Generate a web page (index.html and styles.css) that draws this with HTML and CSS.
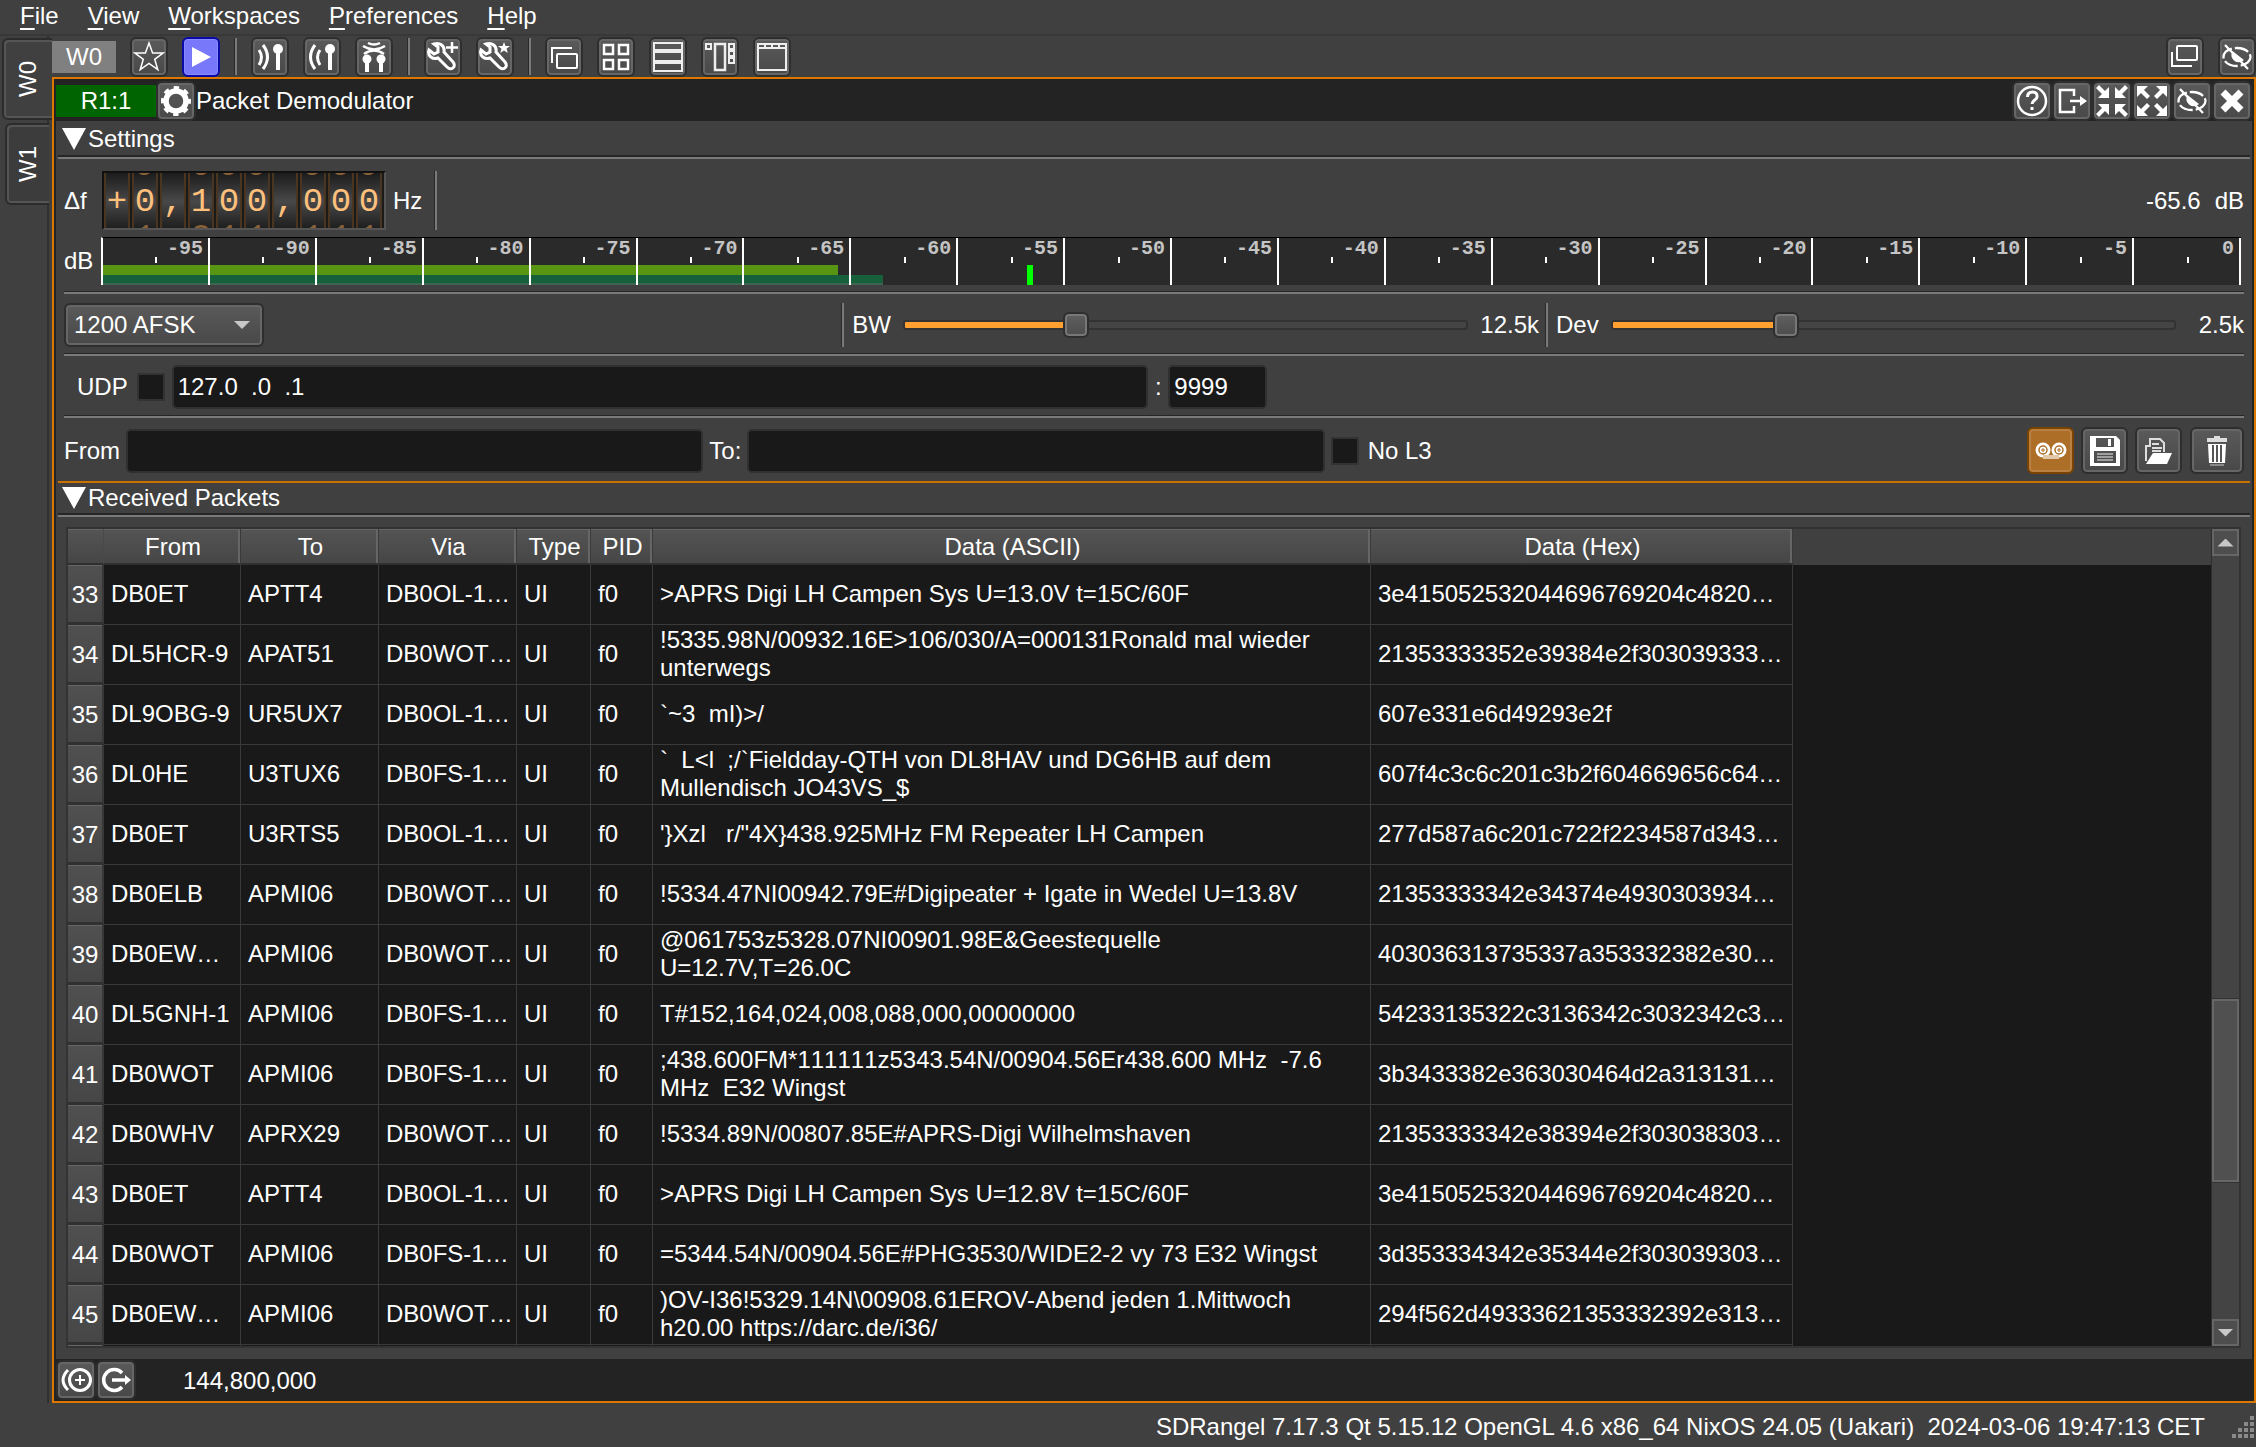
FILE: index.html
```html
<!DOCTYPE html>
<html lang="en">
<head>
<meta charset="utf-8">
<title>SDRangel</title>
<link rel="stylesheet" href="styles.css">
</head>
<body>
<nav class="menubar">
  <button><u>F</u>ile</button><button><u>V</u>iew</button><button><u>W</u>orkspaces</button><button><u>P</u>references</button><button><u>H</u>elp</button>
</nav>
<div class="main">
  <div class="tabs">
    <button class="tab active"><span>W0</span></button>
    <button class="tab"><span>W1</span></button>
  </div>
  <main class="workspace">
    <div class="toolbar">
      <span class="ws-label">W0</span>
      <button class="btn" aria-label="Presets"><svg viewBox="0 0 32 32"><path d="M16 2l3.600 10h10.400l-8.300 6.300 3.100 10.400L16 22.500l-8.800 6.200 3.100-10.400L2 12h10.400z" fill="none" stroke="#fff" stroke-width="1.500"/></svg></button>
      <button class="btn play" aria-label="Start"><svg viewBox="0 0 32 32"><path d="M7 6v20l19-10z" fill="#fff"/></svg></button>
      <i class="vsep"></i>
      <button class="btn" aria-label="Add Rx device"><svg viewBox="0 0 32 32" fill="none" stroke="#fff" stroke-width="3"><path d="M5 9q5 7 0 15M9 4q9 12 0 24"/><circle cx="24" cy="8" r="5" fill="#fff" stroke="none"/><path d="M24 8v21" stroke-width="4"/></svg></button>
      <button class="btn" aria-label="Add Tx device"><svg viewBox="0 0 32 32" fill="none" stroke="#fff" stroke-width="3"><path d="M9 4q-9 12 0 24M14 9q-5 7 0 15"/><circle cx="24" cy="8" r="5" fill="#fff" stroke="none"/><path d="M24 8v21" stroke-width="4"/></svg></button>
      <button class="btn" aria-label="Add MIMO device"><svg viewBox="0 0 32 32" fill="none" stroke="#fff" stroke-width="2.500"><path d="M10 2q6 3 12 0M5 5q11 7 22 0"/><path d="M6 13q10-7 20 0"/><circle cx="9" cy="18" r="4.500" fill="#fff" stroke="none"/><circle cx="23" cy="18" r="4.500" fill="#fff" stroke="none"/><path d="M9 18v13M23 18v13" stroke-width="4"/></svg></button>
      <i class="vsep"></i>
      <button class="btn" aria-label="Add feature"><svg viewBox="0 0 32 32" fill="none" stroke="#fff" stroke-width="3"><path d="M2 9l5 4 4-2 0-5-4-3c6-2 11 2 10 8l9 10c4 5-2 9-6 5l-9-9C6 19 0 15 2 9z"/><path d="M25 1v11M19 6.500h12" stroke-width="2.500"/></svg></button>
      <button class="btn" aria-label="Feature presets"><svg viewBox="0 0 32 32" fill="none" stroke="#fff" stroke-width="3"><path d="M2 9l5 4 4-2 0-5-4-3c6-2 11 2 10 8l9 10c4 5-2 9-6 5l-9-9C6 19 0 15 2 9z"/><path d="M25 1l1.500 4h4.500l-3.500 2.700 1.300 4.300-3.800-2.600-3.800 2.600 1.300-4.300L19 5h4.500z" fill="#fff" stroke="none"/></svg></button>
      <i class="vsep"></i>
      <button class="btn" aria-label="Cascade"><svg viewBox="0 0 32 32" fill="none" stroke="#fff" stroke-width="2"><path d="M4 22V7h20"/><rect x="9" y="13" width="20" height="14" rx="1"/></svg></button>
      <button class="btn" aria-label="Tile"><svg viewBox="0 0 32 32" fill="none" stroke="#fff" stroke-width="2.500"><rect x="4" y="4" width="9" height="9"/><rect x="19" y="4" width="9" height="9"/><rect x="4" y="19" width="9" height="9"/><rect x="19" y="19" width="9" height="9"/></svg></button>
      <button class="btn" aria-label="Stack"><svg viewBox="0 0 32 32" fill="none" stroke="#eee" stroke-width="2"><rect x="2" y="2" width="28" height="7"/><rect x="2" y="11" width="28" height="9"/><rect x="2" y="22" width="28" height="8"/></svg></button>
      <button class="btn" aria-label="Auto stack"><svg viewBox="0 0 32 32" fill="none" stroke="#eee" stroke-width="2"><rect x="2" y="3" width="5" height="5"/><rect x="11" y="3" width="10" height="26" stroke-width="2.500"/><rect x="25" y="3" width="5" height="5"/><rect x="25" y="10" width="5" height="5"/><rect x="25" y="17" width="5" height="5"/></svg></button>
      <button class="btn" aria-label="Tabs"><svg viewBox="0 0 32 32" fill="none" stroke="#eee" stroke-width="2"><rect x="2" y="3" width="28" height="26"/><path d="M3 7h26M9 3v4M16 3v4M23 3v4"/></svg></button>
      <span class="fill"></span>
      <button class="btn" aria-label="Normal view"><svg viewBox="0 0 32 32" fill="none" stroke="#fff" stroke-width="2"><rect x="8" y="5" width="20" height="14" rx="1"/><path d="M3 11v14h20"/></svg></button>
      <button class="btn" aria-label="Hide workspace"><svg viewBox="0 0 32 32" fill="none" stroke="#fff" stroke-width="2.300"><ellipse cx="16" cy="16" rx="13.500" ry="9" stroke-dasharray="14 3"/><path d="M4 4l23 24" /><path d="M12 12a6 6 0 0 0 9 7z" fill="#fff"/></svg></button>
    </div>

    <section class="window">
      <header class="titlebar">
        <span class="index">R1:1</span>
        <button class="tbtn" aria-label="Channel settings"><svg viewBox="0 0 32 32" fill="none" stroke="#fff"><circle cx="16" cy="16" r="10" stroke-width="5.500"/><circle cx="16" cy="16" r="13" stroke-width="4" stroke-dasharray="5.210 5" stroke-dashoffset="2.600"/></svg></button>
        <h1>Packet Demodulator</h1>
        <span class="fill"></span>
        <button class="tbtn" aria-label="Help"><svg viewBox="0 0 32 32" fill="none" stroke="#fff" stroke-width="2.500"><circle cx="16" cy="16" r="14"/><path d="M11.500 12q0-5 5-5t4.500 5c0 3-5 3-5 7" stroke-width="3"/><path d="M14.500 22h3v3h-3z" fill="#fff" stroke="none"/></svg></button>
        <button class="tbtn" aria-label="Move"><svg viewBox="0 0 32 32" fill="none" stroke="#fff" stroke-width="2.500"><path d="M18 11V5H4v22h14v-6M14 16h12"/><path d="M24 11l7 5-7 5z" fill="#fff" stroke="none"/></svg></button>
        <button class="tbtn" aria-label="Shrink"><svg viewBox="0 0 32 32" fill="#fff"><path d="M13 13H2l4-4-6-6 3-3 6 6 4-4zM19 13h11l-4-4 6-6-3-3-6 6-4-4zM13 19H2l4 4-6 6 3 3 6-6 4 4zM19 19h11l-4 4 6 6-3 3-6-6-4 4z"/></svg></button>
        <button class="tbtn" aria-label="Maximize"><svg viewBox="0 0 32 32" fill="#fff"><path d="M1 1h11L8 5l6 6-3 3-6-6-4 4zM31 1H20l4 4-6 6 3 3 6-6 4 4zM1 31h11l-4-4 6-6-3-3-6 6-4-4zM31 31H20l4-4-6-6 3-3 6 6 4-4z"/></svg></button>
        <button class="tbtn" aria-label="Hide"><svg viewBox="0 0 32 32" fill="none" stroke="#fff" stroke-width="2.300"><ellipse cx="16" cy="16" rx="13.500" ry="9" stroke-dasharray="14 3"/><path d="M4 4l23 24"/><path d="M12 12a6 6 0 0 0 9 7z" fill="#fff"/></svg></button>
        <button class="tbtn" aria-label="Close"><svg viewBox="0 0 32 32" fill="none" stroke="#fff" stroke-width="7"><path d="M7 7l18 18M25 7L7 25"/></svg></button>
      </header>

      <div class="panel">
        <h2><i class="tri"></i>Settings</h2>
        <hr class="thick">
        <div class="row freq">
          <span class="lbl">Δf</span>
          <div class="dial">
            <span><b>+</b></span>
            <span><s>9</s><b>0</b><s>1</s></span>
            <span><b>,</b></span>
            <span><s>0</s><b>1</b><s>2</s></span>
            <span><s>9</s><b>0</b><s>1</s></span>
            <span><s>9</s><b>0</b><s>1</s></span>
            <span><b>,</b></span>
            <span><s>9</s><b>0</b><s>1</s></span>
            <span><s>9</s><b>0</b><s>1</s></span>
            <span><s>9</s><b>0</b><s>1</s></span>
          </div>
          <span class="unit">Hz</span>
          <i class="vsep"></i>
          <span class="fill"></span>
          <span>-65.6</span><span class="db">dB</span>
        </div>
        <div class="row level">
          <span class="lbl">dB</span>
          <div class="meter">
            <i class="bar avg" style="width:34.4%"></i>
            <i class="bar mag" style="width:36.5%"></i>
            <i class="bar peak" style="left:43.2%"></i>
            <span>-95</span><span>-90</span><span>-85</span><span>-80</span><span>-75</span><span>-70</span><span>-65</span><span>-60</span><span>-55</span><span>-50</span><span>-45</span><span>-40</span><span>-35</span><span>-30</span><span>-25</span><span>-20</span><span>-15</span><span>-10</span><span>-5</span><span>0</span>
          </div>
        </div>
        <hr>
        <div class="row mode">
          <div class="combo"><select aria-label="Mode"><option>1200 AFSK</option></select><i></i></div>
          <span class="fill"></span>
          <i class="vsep"></i>
          <label for="bw">BW</label>
          <input id="bw" type="range" min="0" max="100" step="0.5" value="29.5" style="--v:30%">
          <span class="val">12.5k</span>
          <i class="vsep"></i>
          <label for="dev">Dev</label>
          <input id="dev" type="range" min="0" max="100" value="30" style="--v:30%">
          <span class="val wide">2.5k</span>
        </div>
        <hr>
        <div class="row udp">
          <label for="udp">UDP</label>
          <input id="udp" type="checkbox">
          <input class="text" type="text" value="127.0  .0  .1" aria-label="UDP address">
          <span class="colon">:</span>
          <input class="text port" type="text" value="9999" aria-label="UDP port">
          <span class="fill"></span>
        </div>
        <hr>
        <div class="row filter">
          <label for="from">From</label>
          <input id="from" class="text" type="text">
          <label for="to">To:</label>
          <input id="to" class="text" type="text">
          <input id="nol3" type="checkbox">
          <label for="nol3" class="nol3">No L3</label>
          <span class="fill"></span>
          <button class="btn tool rec" aria-label="Log to file"><svg viewBox="0 0 32 32"><circle cx="8" cy="15" r="7.500" fill="#fff"/><circle cx="24" cy="15" r="7.500" fill="#fff"/><path d="M8 20h16v4H8z" fill="#e0c8a8"/><circle cx="8" cy="15" r="4" fill="none" stroke="#ad6f28" stroke-width="1.500"/><circle cx="24" cy="15" r="4" fill="none" stroke="#ad6f28" stroke-width="1.500"/><path d="M8 13v4M6 15h4M24 13v4M22 15h4" stroke="#ad6f28"/></svg></button>
          <button class="btn tool" aria-label="Save"><svg viewBox="0 0 32 32"><path fill="#fff" fill-rule="evenodd" d="M1 1h26l4 4v26H1zM7 3v9h18V3zM5 16v12h22V16z"/><path d="M19 4h3v7h-3z" fill="#fff"/><path d="M8 19h16M8 22h16M8 25h16" stroke="#bbb" stroke-width="1.500"/></svg></button>
          <button class="btn tool" aria-label="Open"><svg viewBox="0 0 32 32"><path d="M3 26V11h4V4h10l4 4v9" fill="none" stroke="#ddd" stroke-width="2"/><path d="M9 9h7M9 13h10M9 16h9" stroke="#ddd" stroke-width="2"/><path d="M10 18h19l-5 11H3l5-8z" fill="#fff"/></svg></button>
          <button class="btn tool trash" aria-label="Clear"><svg viewBox="0 0 32 32"><path d="M13 1h6v2h7v4H6V3h7z" fill="#ddd"/><path d="M7 9h18l-1 19H8z" fill="#fff"/><path d="M12 10v17M16 10v17M20 10v17" stroke="#555" stroke-width="2"/><path d="M9 29h14v2H9z" fill="#888"/></svg></button>
        </div>
        <hr class="orange">
        <h2 class="second"><i class="tri"></i>Received Packets</h2>
        <hr class="thick">
        <div class="grid">
          <div class="view">
            <table>
              <colgroup><col class="c0"><col class="c1"><col class="c2"><col class="c2"><col class="c3"><col class="c4"><col class="c5"><col class="c6"></colgroup>
              <thead><tr><th></th><th>From</th><th>To</th><th>Via</th><th>Type</th><th>PID</th><th>Data (ASCII)</th><th>Data (Hex)</th></tr></thead>
              <tbody>
                <tr><th>33</th><td>DB0ET</td><td>APTT4</td><td>DB0OL-1…</td><td>UI</td><td>f0</td><td>&gt;APRS Digi LH Campen Sys U=13.0V t=15C/60F</td><td>3e415052532044696769204c4820…</td></tr>
                <tr><th>34</th><td>DL5HCR-9</td><td>APAT51</td><td>DB0WOT…</td><td>UI</td><td>f0</td><td>!5335.98N/00932.16E&gt;106/030/A=000131Ronald mal wieder<br>unterwegs</td><td>21353333352e39384e2f303039333…</td></tr>
                <tr><th>35</th><td>DL9OBG-9</td><td>UR5UX7</td><td>DB0OL-1…</td><td>UI</td><td>f0</td><td>`~3  mI)&gt;/</td><td>607e331e6d49293e2f</td></tr>
                <tr><th>36</th><td>DL0HE</td><td>U3TUX6</td><td>DB0FS-1…</td><td>UI</td><td>f0</td><td>`  L&lt;l  ;/`Fieldday-QTH von DL8HAV und DG6HB auf dem<br>Mullendisch JO43VS_$</td><td>607f4c3c6c201c3b2f604669656c64…</td></tr>
                <tr><th>37</th><td>DB0ET</td><td>U3RTS5</td><td>DB0OL-1…</td><td>UI</td><td>f0</td><td>'}Xzl   r/"4X}438.925MHz FM Repeater LH Campen</td><td>277d587a6c201c722f2234587d343…</td></tr>
                <tr><th>38</th><td>DB0ELB</td><td>APMI06</td><td>DB0WOT…</td><td>UI</td><td>f0</td><td>!5334.47NI00942.79E#Digipeater + Igate in Wedel U=13.8V</td><td>21353333342e34374e4930303934…</td></tr>
                <tr><th>39</th><td>DB0EW…</td><td>APMI06</td><td>DB0WOT…</td><td>UI</td><td>f0</td><td>@061753z5328.07NI00901.98E&amp;Geestequelle<br>U=12.7V,T=26.0C</td><td>403036313735337a353332382e30…</td></tr>
                <tr><th>40</th><td>DL5GNH-1</td><td>APMI06</td><td>DB0FS-1…</td><td>UI</td><td>f0</td><td>T#152,164,024,008,088,000,00000000</td><td>54233135322c3136342c3032342c3…</td></tr>
                <tr><th>41</th><td>DB0WOT</td><td>APMI06</td><td>DB0FS-1…</td><td>UI</td><td>f0</td><td class="nokern">;438.600FM*111111z5343.54N/00904.56Er438.600 MHz  -7.6<br>MHz  E32 Wingst</td><td>3b3433382e363030464d2a313131…</td></tr>
                <tr><th>42</th><td>DB0WHV</td><td>APRX29</td><td>DB0WOT…</td><td>UI</td><td>f0</td><td>!5334.89N/00807.85E#APRS-Digi Wilhelmshaven</td><td>21353333342e38394e2f303038303…</td></tr>
                <tr><th>43</th><td>DB0ET</td><td>APTT4</td><td>DB0OL-1…</td><td>UI</td><td>f0</td><td>&gt;APRS Digi LH Campen Sys U=12.8V t=15C/60F</td><td>3e415052532044696769204c4820…</td></tr>
                <tr><th>44</th><td>DB0WOT</td><td>APMI06</td><td>DB0FS-1…</td><td>UI</td><td>f0</td><td>=5344.54N/00904.56E#PHG3530/WIDE2-2 vy 73 E32 Wingst</td><td>3d353334342e35344e2f303039303…</td></tr>
                <tr><th>45</th><td>DB0EW…</td><td>APMI06</td><td>DB0WOT…</td><td>UI</td><td>f0</td><td>)OV-I36!5329.14N\00908.61EROV-Abend jeden 1.Mittwoch<br>h20.00 https://darc.de/i36/</td><td>294f562d49333621353332392e313…</td></tr>
                <tr><th></th><td></td><td></td><td></td><td></td><td></td><td></td><td></td></tr>
              </tbody>
            </table>
          </div>
          <div class="scroll">
            <button aria-label="Scroll up"><i class="up"></i></button>
            <div class="track"><span></span><i class="thumb"></i><span class="after"></span></div>
            <button aria-label="Scroll down"><i class="down"></i></button>
          </div>
        </div>
      </div>

      <footer class="winfoot">
        <button class="tbtn" aria-label="Duplicate"><svg viewBox="0 0 32 32" fill="none" stroke="#fff" stroke-width="3"><circle cx="20" cy="16" r="10.500"/><path d="M8 6q-10 10 0 20"/><path d="M20 11v10M15 16h10" stroke-width="2"/></svg></button>
        <button class="tbtn" aria-label="Move channel"><svg viewBox="0 0 32 32" fill="none" stroke="#fff" stroke-width="3.500"><path d="M22 9a10.500 10.500 0 1 0 0 14M12 16h14"/><path d="M25 11l6 5-6 5z" fill="#fff" stroke="none"/></svg></button>
        <span>144,800,000</span>
      </footer>
    </section>
  </main>
</div>
<footer class="status">
  <span>SDRangel 7.17.3 Qt 5.15.12 OpenGL 4.6 x86_64 NixOS 24.05 (Uakari)  2024-03-06 19:47:13 CET</span>
  <svg class="grip" viewBox="0 0 24 24" fill="#8a8a8a"><path d="M19 1h4v4h-4zM19 7h4v4h-4zM13 7h4v4h-4zM19 13h4v4h-4zM13 13h4v4h-4zM7 13h4v4H7zM19 19h4v4h-4zM13 19h4v4h-4zM7 19h4v4H7zM1 19h4v4H1z"/></svg>
</footer>
</body>
</html>
```
FILE: styles.css
```css
* { box-sizing: border-box; }
html, body { height: 100%; }
body {
  margin: 0; display: flex; flex-direction: column; overflow: hidden;
  background: #404040; color: #fff;
  font: 24px/28px "Liberation Sans", Arial, sans-serif;
}
button, input, select { font: inherit; color: inherit; margin: 0; }
button { padding: 0; border: 0; background: none; }
i { display: block; flex: none; }
.fill { flex: 1; }

.menubar { display: flex; gap: 29px; height: 36px; padding: 2px 20px 0; align-items: flex-start; border-bottom: 2px solid #383838; }
.menubar u { text-underline-offset: 4px; text-decoration-thickness: 2px; text-decoration-skip-ink: none; }

.main { flex: 1; display: flex; min-height: 0; }
.tabs { width: 52px; flex: none; display: flex; flex-direction: column; gap: 3px; padding: 2px 3px 0 2px; background: linear-gradient(#303030, #303030) 47px 0 / 2px 100% no-repeat; }
.tab { height: 82px; width: 44px; margin-left: 3px; border: 2px solid #2c2c2c; border-right: 0; border-radius: 6px 0 0 6px; box-shadow: inset 2px 2px 0 #555, inset 0 -2px 0 #555; background: #3c3c3c; display: flex; align-items: center; justify-content: center; }
.tab.active { width: 50px; margin-left: 0; background: #404040; }
.tab span { writing-mode: vertical-rl; transform: rotate(180deg); }

.workspace { flex: 1; min-width: 0; display: flex; flex-direction: column; }
.toolbar { display: flex; align-items: center; gap: 14px; height: 41px; flex: none; }
.ws-label { width: 64px; height: 32px; background: #808080; text-align: center; line-height: 32px; }
.btn, .tbtn {
  flex: none; width: 38px; height: 40px; display: flex; align-items: center; justify-content: center;
  border: 2px solid #2e2e2e; border-radius: 6px; box-shadow: inset 0 0 0 2px #666;
  background: linear-gradient(#5a5a5a, #484848);
}
.btn svg, .tbtn svg { flex: none; width: 32px; height: 32px; display: block; }
.play { border-color: #0a0aa8; background: #7878fa; box-shadow: inset 0 0 0 1px #8a8aff; }
.vsep { width: 3px; align-self: stretch; background: #7a7a7a; border-left: 1px solid #2a2a2a; }
.toolbar .vsep { margin: 2px 0; }

.window { flex: 1; min-height: 0; display: flex; flex-direction: column; border: 2px solid #dc7800; padding: 0 2px; background: #232323; }
.titlebar { display: flex; align-items: center; height: 42px; padding-top: 2px; flex: none; }
.index { width: 100px; height: 32px; line-height: 32px; text-align: center; background: #006400; }
.tbtn { width: 40px; height: 40px; }
h1, h2 { margin: 0; font: inherit; }

.panel { flex: 1; min-height: 0; display: flex; flex-direction: column; background: #404040; padding: 0 2px 11px; }
h2 { display: flex; align-items: center; height: 34px; padding: 2px 0 0 4px; gap: 2px; flex: none; }
h2.second { height: 30px; padding-top: 0; }
.tri { width: 24px; height: 22px; background: #fff; clip-path: polygon(0 0, 100% 0, 50% 100%); }
hr { flex: none; margin: 6px 6px 9px; height: 3px; border: 0; border-top: 1px solid #262626; background: #7a7a7a; }
hr.thick { margin: 0; height: 4px; border-top-width: 2px; }
hr.orange { margin: 7px 0 0; height: 2px; border: 0; background: #cc7000; }
.row { display: flex; align-items: center; padding: 0 6px; flex: none; }
.lbl { width: 38px; }

.freq { height: 59px; margin-top: 12px; }
.dial { display: flex; width: 284px; height: 59px; border: 2px solid #111; border-right-color: #555; border-bottom-color: #555; overflow: hidden; font: 34px/36px "Liberation Mono", monospace; }
.dial span {
  flex: 1; display: flex; flex-direction: column; align-items: center; justify-content: center; height: 57px;
  border-right: 2px solid #1a1a1a; box-shadow: inset 2px 0 0 #4a3520, inset -2px 0 0 #4a3520;
  background: linear-gradient(#1c1c1c, #484848 50%, #1c1c1c);
}
.dial b { font-weight: normal; color: #ffc07c; }
.dial s { text-decoration: none; color: #8a6038; }
.unit { margin: 0 12px 0 7px; }
.db { margin-left: 14px; }

.level { margin-top: 7px; height: 48px; }
.level .lbl { width: 37px; }
.meter { flex: 1; position: relative; display: grid; grid-template-columns: repeat(20, 1fr); height: 48px; margin-right: 3px; border-top: 1px solid #000; border-left: 2px solid #fff; background: #2a2a2a; font: bold 20px/22px "Liberation Mono", monospace; color: #c4c4c4; text-align: right; }
.meter span { position: relative; border-right: 2px solid #fff; padding-right: 5px; }
.meter span::after { content: ""; position: absolute; left: 50%; top: 19px; width: 2px; height: 6px; background: #fff; }
.bar { position: absolute; left: 0; }
.avg { top: 27px; height: 10px; background: #589513; }
.mag { top: 37px; height: 10px; background: #16603c; border-bottom: 2px solid #3c6450; }
.peak { top: 27px; width: 6px; height: 20px; background: #0f0; }

.mode { height: 44px; }
.mode .fill { flex-basis: 12px; }
.combo { display: grid; width: 200px; height: 44px; align-items: center; }
.combo > * { grid-area: 1 / 1; }
.combo select { appearance: none; width: 100%; height: 44px; padding: 0 8px; border: 2px solid #2e2e2e; border-radius: 6px; box-shadow: inset 0 0 0 2px #666; background: linear-gradient(#5a5a5a, #484848); }
.combo i { justify-self: end; margin-right: 14px; width: 16px; height: 8px; background: #c8c8c8; clip-path: polygon(0 0, 100% 0, 50% 100%); pointer-events: none; }
.mode .vsep { margin-right: 8px; }
.mode input { appearance: none; flex: 1; min-width: 0; height: 28px; margin: 0 12px; background: none; }
.mode input::-webkit-slider-runnable-track { height: 10px; border: 2px solid #333; border-radius: 3px; background: linear-gradient(90deg, #ffa030 var(--v), #444 var(--v)); }
.mode input::-webkit-slider-thumb { appearance: none; width: 26px; height: 26px; margin-top: -10px; border: 2px solid #2e2e2e; border-radius: 6px; background: linear-gradient(#606060, #4c4c4c); box-shadow: inset 0 0 0 2px #777; }
.val { margin-right: 6px; }
.val.wide { width: 56px; text-align: right; margin: 0; }

.text { flex: 1; min-width: 0; height: 44px; padding: 0 4px; border: 2px solid #303030; border-radius: 5px; background: #191919; }
input[type="checkbox"] { appearance: none; flex: none; width: 28px; height: 28px; border: 2px solid #333; background: #191919; }
.udp { height: 44px; padding-left: 19px; }
.udp input[type="checkbox"] { margin: 0 7px 0 9px; }
.udp .fill { flex-basis: 12px; }
.colon { width: 20px; text-align: center; }
.text.port { flex: none; width: 99px; }
.filter { height: 47px; }
.filter .text { margin: 0 6px; }
.nol3 { margin-left: 9px; }
.filter .fill { flex-basis: 16px; margin: 0 7px; }
.tool { width: 47px; height: 47px; margin-left: 7px; }
.trash { width: 54px; margin-left: 8px; }
.rec { margin-left: 0; border-color: #7a4300; background: #ad6f28; box-shadow: inset 0 0 0 2px #b98043; }

.grid { flex: 1; min-height: 0; margin: 10px 9px 0 8px; display: flex; border: 2px solid #333; }
.view { flex: 1; min-width: 0; overflow: hidden; background: linear-gradient(#404040 36px, #191919 36px); }
table { width: 1725px; table-layout: fixed; border-collapse: separate; border-spacing: 0; }
.c0 { width: 36px; } .c1 { width: 137px; } .c2 { width: 138px; } .c3 { width: 74px; } .c4 { width: 62px; } .c5 { width: 718px; } .c6 { width: 422px; }
th { padding: 0; font-weight: normal; text-align: center; }
thead th { height: 36px; padding: 2px 0 0 2px; border-bottom: 2px solid #303030; border-right: 1px solid #3a3a3a; background: linear-gradient(#545454, #464646); box-shadow: inset -2px 0 0 #666, inset 0 1px 0 #666; }
thead th:first-child { box-shadow: inset 0 1px 0 #666; border-right-color: #4a4a4a; }
tbody th { height: 60px; padding-top: 2px; border-bottom: 3px solid #303030; border-right: 2px solid #383838; background: linear-gradient(#505050, #464646); box-shadow: inset 0 1px 0 #666; }
td { height: 60px; padding: 0 0 2px 7px; border-right: 1px solid #3a3a3a; border-bottom: 1px solid #3a3a3a; white-space: pre; overflow: hidden; }
.nokern { font-kerning: none; }

.scroll { width: 28px; flex: none; display: flex; flex-direction: column; border-left: 1px solid #2e2e2e; background: #444; }
.scroll button { height: 27px; display: flex; align-items: center; justify-content: center; border: 2px solid #666; background: #4e4e4e; }
.up, .down { width: 16px; height: 8px; background: #c8c8c8; clip-path: polygon(50% 0, 100% 100%, 0 100%); }
.down { clip-path: polygon(0 0, 100% 0, 50% 100%); }
.track { flex: 1; display: flex; flex-direction: column; }
.track span { flex: 446; }
.track .after { flex: 138; }
.thumb { flex: 180; border: 2px solid #666; outline: 1px solid #333; background: #505050; }

.winfoot { display: flex; align-items: center; height: 42px; flex: none; }
.winfoot span { margin: 1px 0 0 47px; }
.status { display: flex; justify-content: flex-end; align-items: center; height: 44px; flex: none; padding: 3px 1px 0 0; white-space: pre; gap: 26px; }
.grip { width: 24px; height: 24px; }
```
